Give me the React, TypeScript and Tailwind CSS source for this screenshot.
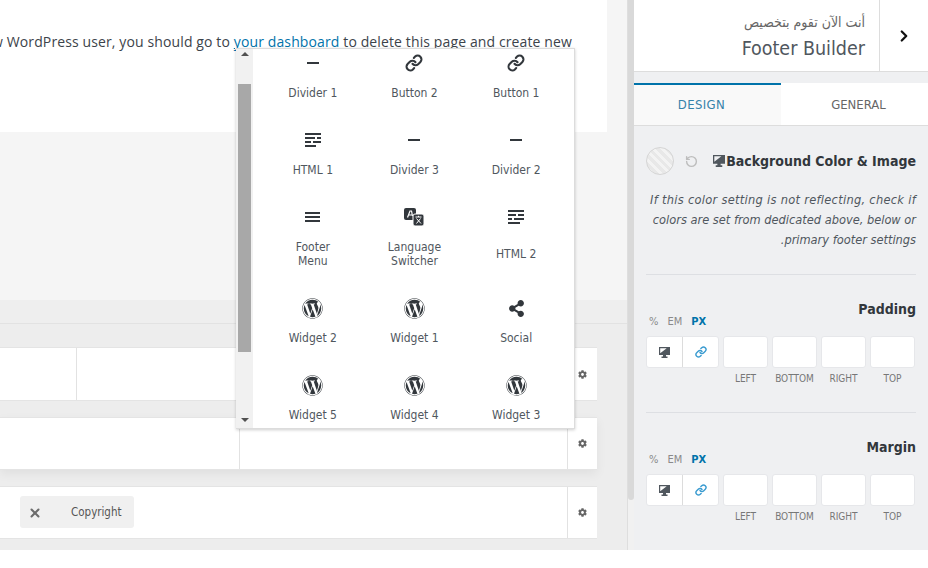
import type { ReactNode } from "react";
import { ChevronRight, Link, RotateCcw, X } from "lucide-react";
import { FaCog, FaShareAlt, FaWordpress } from "react-icons/fa";

const DARK = "#32373c";

function DividerIcon() {
  return <div className="h-[2px] w-[12px] bg-[#32373c]" />;
}

function HtmlIcon({ second = false }: { second?: boolean }) {
  const rows = second
    ? ["M1 2h16", "M1 6h8M11 6h6", "M1 10h4M7 10h10", "M1 14h12"]
    : ["M1 2h16", "M1 6h10M13 6h4", "M1 10h6M9 10h8", "M1 14h11"];
  return (
    <svg width="18" height="16" viewBox="0 0 18 16" fill="none" stroke={DARK} strokeWidth="2">
      {rows.map((d) => (
        <path key={d} d={d} />
      ))}
    </svg>
  );
}

function MenuIcon() {
  return (
    <svg width="15" height="12" viewBox="0 0 15 12" fill="none" stroke={DARK} strokeWidth="2">
      <path d="M0 2h15M0 6h15M0 10h15" />
    </svg>
  );
}

function TranslateIcon() {
  return (
    <svg width="20" height="18" viewBox="0 0 20 18">
      <rect x="0" y="0" width="12" height="12" rx="2" fill={DARK} />
      <rect x="9" y="6" width="11" height="12" rx="2" fill={DARK} stroke="#fff" strokeWidth="1" />
      <path d="M3.5 9.5 6 3h1.5l1 5M4.8 7h3.4" fill="none" stroke="#fff" strokeWidth="1.2" />
      <path d="M11.5 9h6M14.5 7.8V9M12.5 15.5l4-5M12.5 10.5l4.5 5" fill="none" stroke="#fff" strokeWidth="1" />
    </svg>
  );
}

function DesktopIcon({ size = 11 }: { size?: number }) {
  return (
    <svg width={size} height={size} viewBox="0 0 11 11" fill="#50575e">
      <path d="M0 0h11v8H0zM1.2 1.2v5l6.5-5zM4 8h3v1.5h1.5V11h-6V9.5H4z" fillRule="evenodd" />
    </svg>
  );
}

function WidgetTile({ icon, label, top = 0 }: { icon: ReactNode; label: string; top?: number }) {
  return (
    <div className="flex flex-col items-center">
      <div className="flex h-[22px] items-center justify-center">{icon}</div>
      <div
        className="mt-[12px] w-[60px] text-center text-[12px] leading-[14px] text-[#50575e]"
        style={{ paddingTop: top }}
      >
        {label}
      </div>
    </div>
  );
}

function WidgetPopup() {
  const wp = <FaWordpress size={21} color={DARK} />;
  const link = <Link size={18} color={DARK} strokeWidth={2.8} />;
  return (
    <div className="absolute left-[236px] top-[48px] flex h-[381px] w-[339px] overflow-hidden border-y border-r border-[#dcdcdc] bg-white shadow-[0_1px_3px_rgba(0,0,0,0.2)]">
      <div className="flex w-[17px] shrink-0 flex-col items-center bg-[#f1f1f1]">
        <div className="mt-[3px] h-0 w-0 border-x-[4px] border-b-[4px] border-x-transparent border-b-[#505050]" />
        <div className="mt-[28px] h-[268px] w-[13px] bg-[#a8a8a8]" />
        <div className="mt-auto mb-[6px] h-0 w-0 border-x-[4px] border-t-[4px] border-x-transparent border-t-[#505050]" />
      </div>
      <div className="mt-[3px] ml-[9px] grid h-max w-[305px] grid-cols-3 gap-y-[29px]">
        <WidgetTile icon={<DividerIcon />} label="Divider 1" />
        <WidgetTile icon={link} label="Button 2" />
        <WidgetTile icon={link} label="Button 1" />
        <WidgetTile icon={<HtmlIcon />} label="HTML 1" />
        <WidgetTile icon={<DividerIcon />} label="Divider 3" />
        <WidgetTile icon={<DividerIcon />} label="Divider 2" />
        <WidgetTile icon={<MenuIcon />} label="Footer Menu" />
        <WidgetTile icon={<TranslateIcon />} label="Language Switcher" />
        <WidgetTile icon={<HtmlIcon second />} label="HTML 2" top={7} />
        <WidgetTile icon={wp} label="Widget 2" />
        <WidgetTile icon={wp} label="Widget 1" />
        <WidgetTile icon={<FaShareAlt size={17} color={DARK} />} label="Social" />
        <WidgetTile icon={wp} label="Widget 5" />
        <WidgetTile icon={wp} label="Widget 4" />
        <WidgetTile icon={wp} label="Widget 3" />
      </div>
    </div>
  );
}

function BuilderRow({ className, divider, children }: { className: string; divider?: string; children?: ReactNode }) {
  return (
    <div className={`flex w-[597px] border-y border-[#e4e4e4] bg-white ${className}`}>
      <div className="flex-1">
        <div className={`h-full border-[#e2e2e2] ${divider ?? ""}`}>{children}</div>
      </div>
      <div className="flex w-[30px] items-center justify-center border-l border-[#e2e2e2] pr-[1px]">
        <FaCog size={9} color="#666" />
      </div>
    </div>
  );
}

function SpacingControl({ title }: { title: string }) {
  return (
    <div>
      <div className="text-right text-[14px] font-bold leading-[18px] text-[#32373c]">{title}</div>
      <div className="-mt-[3px] flex gap-[9px] pl-[3px] text-[11px] leading-[13px] text-[#8a8a8a]">
        <span>%</span>
        <span>EM</span>
        <span className="font-bold text-[#0073aa]">PX</span>
      </div>
      <div className="mt-[8px] flex gap-[4px]">
        <div className="flex h-[32px] w-[73px] rounded-[3px] border border-[#e6e7ea] bg-white">
          <div className="flex w-[36px] items-center justify-center border-r border-[#dcdcdc]">
            <DesktopIcon />
          </div>
          <div className="flex flex-1 items-center justify-center">
            <Link size={12} color="#3a9bd0" strokeWidth={2.8} />
          </div>
        </div>
        {["LEFT", "BOTTOM", "RIGHT", "TOP"].map((side) => (
          <div key={side} className="w-[45px]">
            <div className="h-[32px] rounded-[3px] border border-[#e6e7ea] bg-white" />
            <div className="mt-[5px] text-center text-[10px] leading-[12px] text-[#777]">{side}</div>
          </div>
        ))}
      </div>
    </div>
  );
}

export default function App() {
  return (
    <div className="relative h-[568px] w-[928px] overflow-hidden bg-white font-['DejaVu_Sans_Condensed','DejaVu_Sans',sans-serif]">
      <div className="flex h-[550px]">
        {/* Page preview and builder */}
        <div className="flex w-[627px] flex-col">
          <div className="h-[300px] bg-[#f5f5f5]">
            <div className="flex h-[132px] w-[607px] justify-end overflow-hidden bg-white pr-[35px] pt-[31px]">
              <p className="whitespace-nowrap font-['Open_Sans',sans-serif] text-[14px] leading-[22px] tracking-[0.12px] text-[#3c434a]">
                If you are a new WordPress user, you should go to{" "}
                <span className="text-[#0073aa] underline decoration-[#0073aa]">your dashboard</span> to delete this page and create new
              </p>
            </div>
          </div>
          <div className="h-[24px] border-b border-[#e2e2e2] bg-[#eeeeee]" />
          <div className="flex flex-1 flex-col gap-[16px] bg-[#ededed] pt-[23px]">
            <BuilderRow className="h-[54px]" divider="w-[77px] border-r" />
            <BuilderRow className="h-[53px] shadow-[0_4px_10px_rgba(0,0,0,0.06)]" divider="w-[240px] border-r" />
            <BuilderRow className="h-[53px]">
              <div className="ml-[20px] mt-[9px] flex h-[32px] w-[114px] items-center rounded-[3px] bg-[#f0f0f0] pl-[8px] pt-[2px]">
                <X size={14} color="#6b6b6b" strokeWidth={3.6} />
                <span className="ml-[29px] text-[11.5px] text-[#555]">Copyright</span>
              </div>
            </BuilderRow>
          </div>
        </div>

        {/* Panel scrollbar */}
        <div className="w-[7px] border-l border-[#dedede] bg-[#f1f1f1]">
          <div className="h-[500px] rounded-b-[3px] bg-[#d9d9d9]" />
        </div>

        {/* Customizer panel */}
        <div className="flex w-[294px] flex-col bg-[#eff0f2]">
          <div className="flex h-[72px] border-b border-[#dddddd] bg-white">
            <div className="flex-1 pr-[14px] pt-[13px] text-right">
              <div dir="rtl" className="text-[14px] leading-[18px] text-[#666]">
                أنت الآن تقوم بتخصيص
              </div>
              <div className="mt-[5px] text-[19.5px] leading-[26px] text-[#50575e]">Footer Builder</div>
            </div>
            <div className="flex w-[49px] items-center justify-center border-l border-[#dddddd]">
              <ChevronRight size={18} color="#111" strokeWidth={3} />
            </div>
          </div>
          <div className="mt-[11px] flex h-[43px] border-b border-[#dddddd] bg-white pt-[1px] text-[13px]">
            <div className="-mt-[1px] flex w-[147px] items-center justify-center border-t-2 border-[#0073aa] bg-[#f9f9f9] pr-[12px] tracking-[0.4px] text-[#3582aa]">
              DESIGN
            </div>
            <div className="flex flex-1 items-center justify-center pl-[8px] text-[#666]">GENERAL</div>
          </div>
          <div className="flex-1 px-[12px]">
            <div className="mt-[21px] flex items-center">
              <div className="h-[28px] w-[28px] rounded-full border border-[#d5d5d5] bg-[repeating-linear-gradient(45deg,#e8e8e8_0_3px,#f3f3f3_3px_6px)]" />
              <RotateCcw size={13} color="#bdbdbd" strokeWidth={2.6} className="ml-[11px]" />
              <div className="ml-auto flex items-center text-[14px] font-bold text-[#32373c]">
                <DesktopIcon size={12} />
                <span className="ml-[1px]">Background Color &amp; Image</span>
              </div>
            </div>
            <p className="mt-[15px] text-right text-[12.7px] italic leading-[20px] text-[#50575e]">
              <span className="tracking-[0.3px]">If this color setting is not reflecting, check if</span>
              <br />
              colors are set from dedicated above, below or
              <br />
              .primary footer settings
            </p>
            <div className="mt-[24px] h-px bg-[#dddfe3]" />
            <div className="mt-[25px]">
              <SpacingControl title="Padding" />
            </div>
            <div className="mt-[27px] h-px bg-[#dddfe3]" />
            <div className="mt-[25px]">
              <SpacingControl title="Margin" />
            </div>
          </div>
        </div>
      </div>
      <WidgetPopup />
    </div>
  );
}
